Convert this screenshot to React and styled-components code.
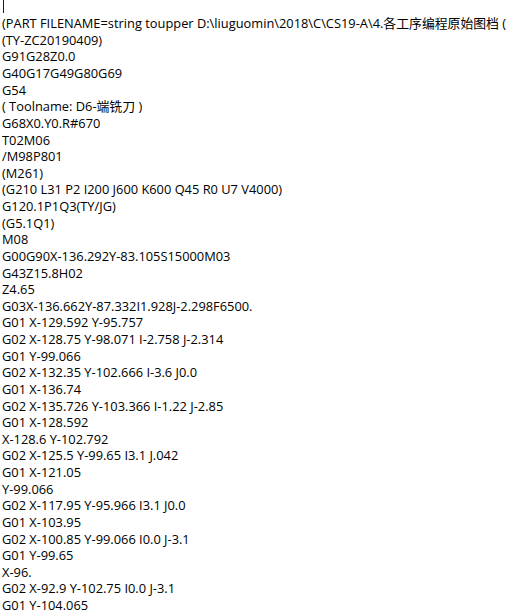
import React from 'react';
import styled, {createGlobalStyle} from 'styled-components';

const GlobalStyle = createGlobalStyle`
	html, body {
		margin: 0;
		padding: 0;
		background: #ffffff;
	}
	body {
		width: 520px;
		height: 614px;
		overflow: hidden;
	}
`;

const Editor = styled.div`
	width: 520px;
	height: 614px;
	overflow: hidden;
	background: #ffffff;
	box-sizing: border-box;
	padding-left: 2px;
	font-family: "Open Sans", "Noto Sans CJK SC", sans-serif;
	font-size: 12.85px;
	line-height: 16.64px;
	color: #000000;
`;

const CaretLine = styled.div`
	height: 15.2px;
`;

const Caret = styled.span`
	display: block;
	width: 1px;
	height: 12.5px;
	margin-left: 1px;
	background: #1a1a1a;
`;

const Line = styled.div`
	white-space: pre;
	height: 16.64px;
`;

const lines = [
	'(PART FILENAME=string toupper D:\\liuguomin\\2018\\C\\CS19-A\\4.各工序编程原始图档 (',
	'(TY-ZC20190409)',
	'G91G28Z0.0',
	'G40G17G49G80G69',
	'G54',
	'( Toolname: D6-端铣刀 )',
	'G68X0.Y0.R#670',
	'T02M06',
	'/M98P801',
	'(M261)',
	'(G210 L31 P2 I200 J600 K600 Q45 R0 U7 V4000)',
	'G120.1P1Q3(TY/JG)',
	'(G5.1Q1)',
	'M08',
	'G00G90X-136.292Y-83.105S15000M03',
	'G43Z15.8H02',
	'Z4.65',
	'G03X-136.662Y-87.332I1.928J-2.298F6500.',
	'G01 X-129.592 Y-95.757',
	'G02 X-128.75 Y-98.071 I-2.758 J-2.314',
	'G01 Y-99.066',
	'G02 X-132.35 Y-102.666 I-3.6 J0.0',
	'G01 X-136.74',
	'G02 X-135.726 Y-103.366 I-1.22 J-2.85',
	'G01 X-128.592',
	'X-128.6 Y-102.792',
	'G02 X-125.5 Y-99.65 I3.1 J.042',
	'G01 X-121.05',
	'Y-99.066',
	'G02 X-117.95 Y-95.966 I3.1 J0.0',
	'G01 X-103.95',
	'G02 X-100.85 Y-99.066 I0.0 J-3.1',
	'G01 Y-99.65',
	'X-96.',
	'G02 X-92.9 Y-102.75 I0.0 J-3.1',
	'G01 Y-104.065',
];

export default function App() {
	return (
		<>
			<GlobalStyle />
			<Editor>
				<CaretLine>
					<Caret />
				</CaretLine>
				{lines.map((text, index) =>
					<Line key={index}>{text}</Line>
				)}
			</Editor>
		</>
	);
}
